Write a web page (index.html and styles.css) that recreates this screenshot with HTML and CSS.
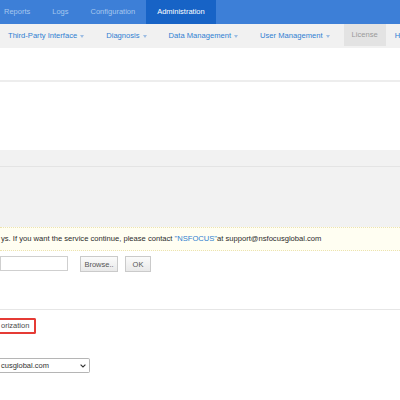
FILE: index.html
```html
<!DOCTYPE html>
<html>
<head>
<meta charset="utf-8">
<link rel="stylesheet" href="styles.css">
</head>
<body>
<header class="topbar">
  <ul class="topnav">
    <li>Reports</li>
    <li>Logs</li>
    <li>Configuration</li>
    <li class="active">Administration</li>
  </ul>
</header>
<nav class="subnav">
  <ul class="menu">
    <li>Third-Party Interface<span class="caret"></span></li>
    <li>Diagnosis<span class="caret"></span></li>
    <li>Data Management<span class="caret"></span></li>
    <li>User Management<span class="caret"></span></li>
    <li class="license">License</li>
    <li class="help">H</li>
  </ul>
</nav>
<div class="blank-top"></div>
<div class="blank-mid"></div>
<section class="panel">
  <div class="panel-head"></div>
  <div class="panel-body"></div>
</section>
<div class="notice">ys. If you want the service continue, please contact <span class="brand">"NSFOCUS"</span>at support@nsfocusglobal.com</div>
<div class="upload">
  <div class="file-input"></div>
  <button class="btn browse">Browse..</button>
  <button class="btn ok">OK</button>
</div>
<div class="divider"></div>
<div class="tabs">
  <span class="tab-marked">orization</span>
</div>
<div class="select">
  <span class="select-text">cusglobal.com</span>
  <svg class="chev" width="6" height="4" viewBox="0 0 6 4"><path d="M0.6 0.6 L3 3 L5.4 0.6" fill="none" stroke="#333" stroke-width="1.1"/></svg>
</div>
</body>
</html>
```
FILE: styles.css
```css
html, body {
  margin: 0;
  padding: 0;
  background: #fff;
  overflow: hidden;
  font-family: "Liberation Sans", Arial, sans-serif;
  font-size: 7.5px;
}
ul {
  list-style: none;
  margin: 0;
  padding: 0;
}
.topbar {
  height: 24px;
  background: #3d7fd7;
}
.topnav {
  display: flex;
  margin-left: -7px;
  white-space: nowrap;
}
.topnav li {
  padding: 0 11px;
  line-height: 24px;
  height: 24px;
  color: #a6c7ee;
}
.topnav li.active {
  background: #1763c6;
  color: #fff;
}
.subnav {
  height: 24px;
  background: #f1f1f1;
}
.menu {
  display: flex;
  margin-left: -3px;
  white-space: nowrap;
  font-size: 7.6px;
}
.menu li {
  padding: 0 11px;
  line-height: 24px;
  height: 24px;
  color: #2f80d2;
  display: flex;
  align-items: center;
}
.caret {
  display: inline-block;
  width: 0;
  height: 0;
  margin-left: 3px;
  border-left: 2.5px solid transparent;
  border-right: 2.5px solid transparent;
  border-top: 3px solid #9dbde3;
}
.menu li.license {
  margin-left: 3px;
  padding: 0 8px;
  height: 22px;
  line-height: 22px;
  background: #e3e3e3;
  color: #9a9a9a;
}
.menu li.help {
  padding-left: 9px;
}
.blank-top {
  height: 32px;
  border-bottom: 2px solid #ededed;
}
.blank-mid {
  height: 68px;
}
.panel {
  background: #f2f2f2;
}
.panel-head {
  height: 16px;
  border-bottom: 1px solid #e4e4e4;
}
.panel-body {
  height: 60px;
}
.notice {
  height: 22px;
  line-height: 22px;
  background: #fffef2;
  border-top: 1px dotted #ece3b0;
  border-bottom: 1px dotted #ece3b0;
  color: #2b2b2b;
  padding-left: 1px;
  white-space: nowrap;
  font-size: 7.6px;
}
.brand {
  color: #2f7fd0;
}
.upload {
  display: flex;
  align-items: flex-start;
  margin-top: 5px;
  height: 16px;
}
.file-input {
  width: 68px;
  height: 15px;
  box-sizing: border-box;
  border: 1px solid #cfcfcf;
  background: #fff;
}
.btn {
  height: 16px;
  box-sizing: border-box;
  border: 1px solid #cacaca;
  background: linear-gradient(#fbfbfb, #e9e9e9);
  font-family: "Liberation Sans", Arial, sans-serif;
  font-size: 7.5px;
  color: #555;
  padding: 0;
  margin: 0;
}
.browse {
  margin-left: 12px;
  width: 38px;
}
.ok {
  margin-left: 7px;
  width: 26px;
}
.divider {
  margin-top: 37px;
  border-top: 1px solid #e6e6e6;
}
.tabs {
  margin-top: 8px;
  height: 16px;
}
.tab-marked {
  display: inline-block;
  box-sizing: border-box;
  height: 16px;
  line-height: 12px;
  width: 36px;
  padding-left: 1px;
  border: 2px solid #e53b35;
  border-left: none;
  border-radius: 0 2px 2px 0;
  color: #4a4a4a;
}
.select {
  margin-top: 24px;
  width: 90px;
  height: 15px;
  box-sizing: border-box;
  border: 1px solid #b5b5b5;
  border-left: none;
  border-radius: 0 2px 2px 0;
  display: flex;
  align-items: center;
  justify-content: space-between;
  padding-right: 3px;
  color: #333;
}
.select-text {
  padding-left: 1px;
}
.chev {
  display: block;
}
```
